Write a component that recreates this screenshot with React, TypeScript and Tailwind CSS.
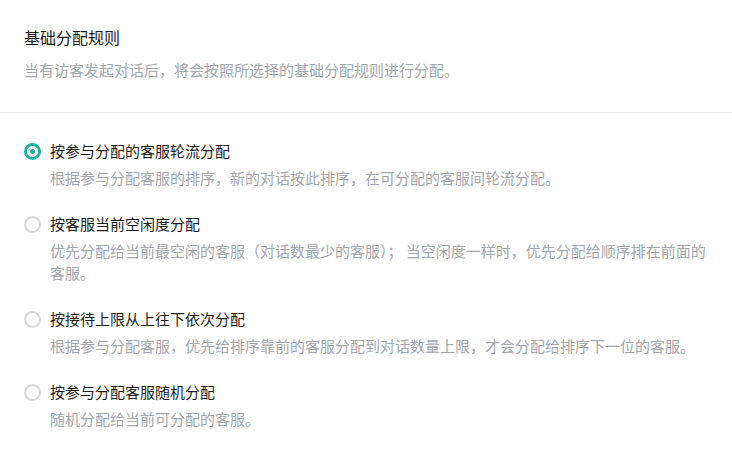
import React from "react";

const options = [
  {
    title: "按参与分配的客服轮流分配",
    desc: "根据参与分配客服的排序，新的对话按此排序，在可分配的客服间轮流分配。",
  },
  {
    title: "按客服当前空闲度分配",
    desc: "优先分配给当前最空闲的客服（对话数最少的客服）； 当空闲度一样时，优先分配给顺序排在前面的客服。",
  },
  {
    title: "按接待上限从上往下依次分配",
    desc: "根据参与分配客服，优先给排序靠前的客服分配到对话数量上限，才会分配给排序下一位的客服。",
  },
  {
    title: "按参与分配客服随机分配",
    desc: "随机分配给当前可分配的客服。",
  },
];

const font = "font-['Noto_Sans_CJK_SC','Noto_Sans',sans-serif]";

const App: React.FC = () => {
  const [selected, setSelected] = React.useState(0);

  return (
    <div className={`w-[732px] h-[464px] bg-white overflow-hidden ${font}`}>
      <div className="px-6 pt-[26px] pb-[31px] border-b border-[#e8e9ee]">
        <h2 className="text-[16px] leading-[22px] text-[#1b1b1b]">基础分配规则</h2>
        <p className="mt-[11px] text-[15px] leading-[22px] text-[#a3a7ae]">
          当有访客发起对话后，将会按照所选择的基础分配规则进行分配。
        </p>
      </div>

      <div className="px-6 pt-[27px] flex flex-col gap-[24px]">
        {options.map((o, i) => (
          <div key={o.title} className="flex flex-col cursor-pointer" onClick={() => setSelected(i)}>
            <div className="flex items-center h-[22px]">
              {selected === i ? (
                <span className="w-[17px] h-[17px] rounded-full border-[3px] border-[#1bb4a2] flex items-center justify-center">
                  <span className="w-[5px] h-[5px] rounded-full bg-[#1bb4a2]" />
                </span>
              ) : (
                <span className="w-[17px] h-[17px] rounded-full border-[2px] border-[#d8d9dd]" />
              )}
              <span className="ml-[9px] text-[15px] leading-[22px] text-[#1b1b1b]">{o.title}</span>
            </div>
            <p className="mt-[5px] pl-[26px] text-[15px] leading-[22px] text-[#a3a7ae]">{o.desc}</p>
          </div>
        ))}
      </div>
    </div>
  );
};

export default App;
